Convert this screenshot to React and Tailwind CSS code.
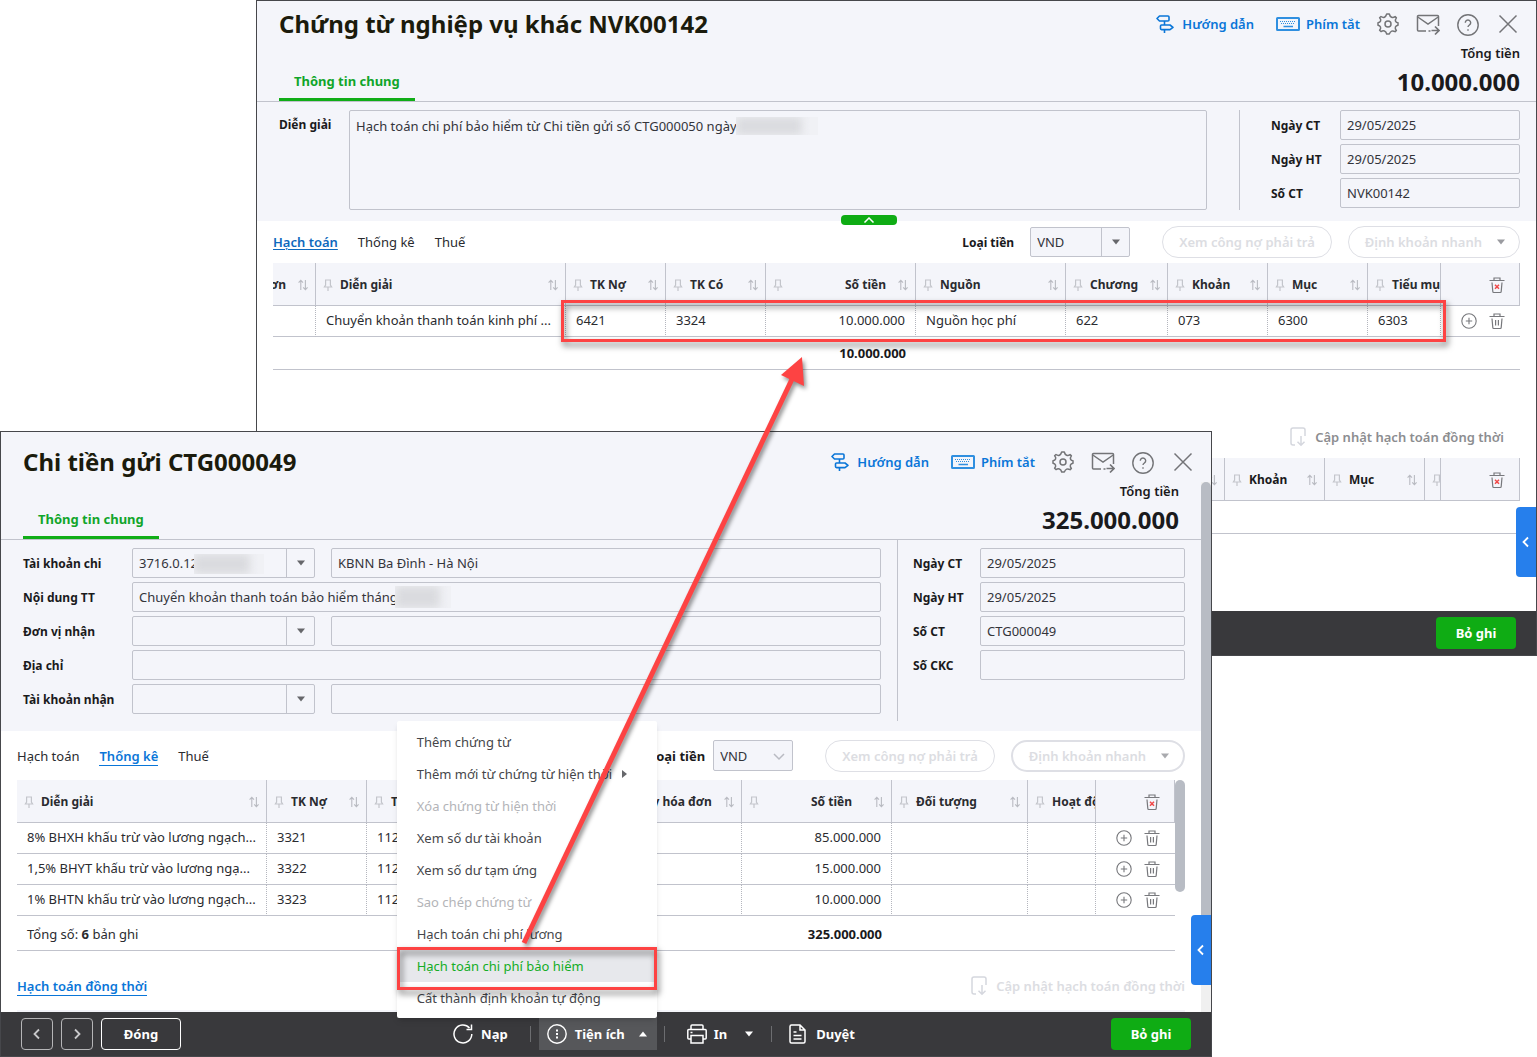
import { useState } from 'react';

const GuideIcon = () => (
  <svg width="18" height="20" viewBox="0 0 18 20" fill="none" stroke="currentColor" strokeWidth="1.600">
    <path d="M3.500 2h8.500a1 1 0 0 1 1 1v3a1 1 0 0 1-1 1H3.500L1 4.500z" strokeLinejoin="round" />
    <path d="M5.500 11H14l3 2.300-3 2.300H5.500a1 1 0 0 1-1-1V12a1 1 0 0 1 1-1z" strokeLinejoin="round" />
    <path d="M8.500 7v4M8.500 15.600V19" />
  </svg>
);

const KeyboardIcon = () => (
  <svg width="24" height="16" viewBox="0 0 24 16" fill="none" stroke="#2f8fe0">
    <rect x="1" y="2" width="22" height="12" rx=".5" strokeWidth="2" />
    <path d="M4 5.500h16M5 7.500h14" strokeWidth="1" strokeDasharray="1 1" />
    <path d="M7.500 10.500h9.500" strokeWidth="1.500" />
  </svg>
);

const GearIcon = () => (
  <svg width="24" height="24" viewBox="0 0 24 24" fill="none" stroke="currentColor" strokeWidth="1.500" strokeLinejoin="round">
    <circle cx="12" cy="12" r="3" />
    <path d="M10.700 2h2.600q.6 2.700 2.300 3.300t3.500-.7l1.300 1.300q-1.500 2-.8 3.400t2.400 1.400v2.600q-2 .2-2.600 1.800t1 3.300l-1.300 1.300q-2-1.200-3.400-.6T13.300 22h-2.600q-.6-2.400-2.300-3t-3.300.6l-1.500-1.300q1.500-1.900.9-3.300T2 13.300v-2.600q2-.1 2.600-1.700t-1-3.200L5 4.500q1.900 1.300 3.400.7T10.700 2z" />
  </svg>
);

const MailIcon = () => (
  <svg width="24" height="24" viewBox="0 0 24 24" fill="none" stroke="currentColor" strokeWidth="1.500">
    <path d="M10 19H2.500a1 1 0 0 1-1-1V4.500a1 1 0 0 1 1-1h19a1 1 0 0 1 1 1V14M12.500 19h2" />
    <path d="M1.800 5 12 12 22.200 5" />
    <path d="M15.500 18.500H23M19 14.500l4 4-4 4" strokeWidth="1.700" />
  </svg>
);

const HelpIcon = () => (
  <svg width="24" height="24" viewBox="0 0 24 24" fill="none" stroke="currentColor" strokeWidth="1.400">
    <circle cx="12" cy="13" r="10.200" />
    <path d="M9.300 10.700a2.700 2.700 0 1 1 4.200 2.200c-1 .7-1.500 1-1.500 2.200" />
    <path d="M12 17.200v1.500" />
  </svg>
);

const CloseIcon = () => (
  <svg width="24" height="24" viewBox="0 0 24 24" fill="none" stroke="currentColor" strokeWidth="1.500">
    <path d="M3.500 3.500l17 17M20.500 3.500l-17 17" />
  </svg>
);

const PinIcon = () => (
  <svg className="shrink-0" width="10" height="12" viewBox="0 0 10 12" fill="none" stroke="#c3c5cb" strokeWidth="1.200">
    <path d="M2.600 1h4.800v5l1.200 2H1.400l1.200-2zM5 8v4" />
  </svg>
);

const SortIcon = () => (
  <svg className="shrink-0" width="10" height="12" viewBox="0 0 10 12" fill="none" stroke="#b9bbc2" strokeWidth="1.100">
    <path d="M2.800 11V1.500M.6 3.700l2.200-2.400L5 3.700M7.400 1v9.500M5.200 8.300l2.200 2.400 2.200-2.400" />
  </svg>
);

const TrashIcon = ({ clear }) => (
  <svg width="16" height="18" viewBox="0 0 16 18" fill="none" stroke="#77787c" strokeWidth="1.200">
    <path d="M.5 4.500h15M5 4.500V2h6v2.500M3 6.500l.8 9a1 1 0 0 0 1 1h6.400a1 1 0 0 0 1-1l.8-9" />
    {clear ? <path d="M6 8.700l4 4M10 8.700l-4 4" stroke="#f04848" strokeWidth="1.500" /> : <path d="M6.600 8v5.500M9.400 8v5.500" />}
  </svg>
);

const PlusIcon = () => (
  <svg width="16" height="16" viewBox="0 0 16 16" fill="none" stroke="#77787c" strokeWidth="1.100">
    <circle cx="8" cy="8" r="7.200" />
    <path d="M8 4.800v6.400M4.800 8h6.400" />
  </svg>
);

const UpdateIcon = () => (
  <svg width="16" height="20" viewBox="0 0 16 20" fill="none" stroke="#d5d7de" strokeWidth="1.500">
    <path d="M5 18H3a2 2 0 0 1-2-2V3a2 2 0 0 1 2-2h10a2 2 0 0 1 2 2v6M11 9v9M7.500 14.800l3.500 3.500 3.500-3.500" />
  </svg>
);

const Triangle = ({ dir = 'down', className }) => (
  <svg className={className} width="8" height="6" viewBox="0 0 8 6" fill="currentColor">
    {dir === 'down' && <path d="M0 .5h8L4 5.500z" />}
    {dir === 'up' && <path d="M0 5.500h8L4 .5z" />}
  </svg>
);

const Chevron = ({ d }) => (
  <svg width="16" height="16" viewBox="0 0 16 16" fill="none" stroke="currentColor" strokeWidth="1.800">
    <path d={d} />
  </svg>
);
const LEFT = 'M10 3.500 5.500 8l4.500 4.500';
const RIGHT = 'M6 3.500 10.500 8 6 12.500';

const Smudge = ({ className }) => (
  <span className={`absolute overflow-hidden bg-[#f0f1f5] ${className}`}>
    <span className="block h-full w-4/5 bg-[#dadbdf] blur-xs" />
  </span>
);

const TitleBar = ({ title, className }) => (
  <div className={`flex items-center justify-between pr-4 pl-[22px] ${className}`}>
    <h1 className="text-2xl font-bold text-[#1b1b0c]">{title}</h1>
    <div className="flex items-center gap-4 text-[#737477]">
      <div className="flex gap-[22px] font-semibold text-[#0a76d8]">
        <a href="#guide" className="flex items-center gap-2"><GuideIcon />Hướng dẫn</a>
        <a href="#keys" className="flex items-center gap-[6px]"><KeyboardIcon />Phím tắt</a>
      </div>
      <button aria-label="Thiết lập"><GearIcon /></button>
      <button aria-label="Gửi mail"><MailIcon /></button>
      <button aria-label="Trợ giúp"><HelpIcon /></button>
      <button aria-label="Đóng cửa sổ"><CloseIcon /></button>
    </div>
  </div>
);

const TotalBar = ({ total, className }) => (
  <div className={`flex h-[58px] items-end justify-between border-b border-[#c1c3cc] pl-[22px] ${className}`}>
    <button className="border-b-3 border-[#10ad17] px-[15px] pb-2 font-bold text-[#10a52a]">Thông tin chung</button>
    <div className="h-full text-right font-semibold">
      <div>Tổng tiền</div>
      <div className="mt-[3px] text-2xl leading-[34px] font-bold">{total}</div>
    </div>
  </div>
);

const Label = ({ htmlFor, children, className }) => (
  <label htmlFor={htmlFor} className={`shrink-0 pt-[2px] text-xs font-bold ${className}`}>{children}</label>
);

const Input = ({ id, label, value = '', className }) => (
  <input
    id={id}
    aria-label={label}
    defaultValue={value}
    className={`h-[30px] min-w-0 rounded-xs border border-[#c1c3cc] px-[6px] text-[#33343a] ${className}`}
  />
);

const Combo = ({ id, value = '', className, children }) => (
  <div className={`relative shrink-0 ${className}`}>
    <select id={id} className="h-[30px] w-full appearance-none rounded-xs border border-[#c1c3cc] bg-[#f4f5fa] px-[6px] text-[#33343a]">
      <option>{value}</option>
    </select>
    {children}
    <span className="pointer-events-none absolute inset-y-0 right-0 flex w-[29px] items-center justify-center border-l border-[#c1c3cc] text-[#66676b]">
      <Triangle />
    </span>
  </div>
);

const SideField = ({ id, label, value, labelClass, inputClass }) => (
  <div className="flex items-center">
    <Label htmlFor={id} className={labelClass}>{label}</Label>
    <Input id={id} value={value} className={inputClass} />
  </div>
);

const HeadCell = ({ label, align = 'mr-auto', clipLeft, noPin }) => (
  <th className="h-[43px] overflow-hidden border-r border-b border-[#c1c3cc] bg-[#f4f5fa] p-0 pt-[2px] text-left text-xs font-bold whitespace-nowrap">
    <div className={`flex items-center ${clipLeft ? 'justify-end' : ''} px-[7px]`}>
      {!noPin && <PinIcon />}
      {label && <span className={`shrink-0 ${align}`}><span className={noPin ? '' : 'ml-[7px]'}>{label}</span></span>}
      <SortIcon />
    </div>
  </th>
);

const ClearCell = () => (
  <th className="overflow-hidden border-r border-b border-[#c1c3cc] bg-[#f4f5fa] p-0 pt-[2px]">
    <div className="flex justify-end pr-[14px]">
      <button aria-label="Xóa tất cả dòng"><TrashIcon clear /></button>
    </div>
  </th>
);

const Cell = ({ children, right }) => (
  <td className={`h-[31px] truncate border-b border-b-[#c1c3cc] p-0 pr-[10px] pb-[2px] pl-[10px] [border-right:1px_dotted_#b4b6be] ${right ? 'text-right' : ''}`}>
    {children}
  </td>
);

const ActionCell = () => (
  <td className="border-b border-[#c1c3cc] p-0">
    <div className="flex items-center justify-end gap-3 pr-[15px]">
      <button aria-label="Thêm dòng"><PlusIcon /></button>
      <button aria-label="Xóa dòng"><TrashIcon /></button>
    </div>
  </td>
);

const Cols = ({ widths }) => (
  <colgroup>
    {widths.map((w, i) => <col key={i} style={w ? { width: w } : undefined} />)}
  </colgroup>
);

const PillButton = ({ children, className }) => (
  <button disabled className={`flex h-8 items-center rounded-full border-[#dedfe5] font-semibold text-[#dcdde2] ${className}`}>
    {children}
  </button>
);

const PostButton = () => (
  <button className="h-8 w-20 rounded bg-[#0fac14] font-bold text-white">Bỏ ghi</button>
);

const EdgeTab = ({ className }) => (
  <button aria-label="Mở rộng" className={`absolute right-0 flex h-[70px] w-5 items-center justify-center rounded-l bg-[#267fec] text-white ${className}`}>
    <Chevron d={LEFT} />
  </button>
);

const VoucherWindow = () => (
  <section className="ml-64 border border-[#46474b] bg-white">
    <div className="relative bg-[#f4f5fa]">
      <TitleBar title="Chứng từ nghiệp vụ khác NVK00142" className="h-[43px] pt-[3px]" />
      <TotalBar total="10.000.000" className="pr-4" />
      <div className="flex pt-2 pr-4 pb-[11px] pl-[22px]">
        <Label htmlFor="nvk-desc" className="mt-[5px] w-[70px]">Diễn giải</Label>
        <div className="relative flex min-w-0 flex-1">
          <textarea
            id="nvk-desc"
            className="h-[100px] w-full resize-none rounded-xs border border-[#c1c3cc] px-[6px] py-[6px] text-[#33343a]"
            defaultValue="Hạch toán chi phí bảo hiểm từ Chi tiền gửi số CTG000050 ngày"
          />
          <Smudge className="top-[7px] left-[387px] h-[18px] w-[82px]" />
        </div>
        <div className="ml-8 flex flex-col gap-1 border-l border-[#c1c3cc] pl-[31px]">
          <SideField id="nvk-ct" label="Ngày CT" value="29/05/2025" labelClass="w-[69px]" inputClass="w-[180px]" />
          <SideField id="nvk-ht" label="Ngày HT" value="29/05/2025" labelClass="w-[69px]" inputClass="w-[180px]" />
          <SideField id="nvk-so" label="Số CT" value="NVK00142" labelClass="w-[69px]" inputClass="w-[180px]" />
        </div>
      </div>
      <button aria-label="Thu gọn" className="absolute -bottom-1 left-[584px] flex h-[10px] w-14 items-center justify-center rounded bg-[#0fac14] text-white">
        <svg width="12" height="6" viewBox="0 0 12 6" fill="none" stroke="currentColor" strokeWidth="1.500"><path d="M1.500 5.500 6 1l4.500 4.500" /></svg>
      </button>
    </div>

    <div className="flex h-[42px] items-center px-4">
      <nav className="flex gap-5 text-[#2a2b2f]">
        <a href="#ht" className="font-semibold text-[#0f69bd] underline underline-offset-2">Hạch toán</a>
        <a href="#tk">Thống kê</a>
        <a href="#thue">Thuế</a>
      </nav>
      <Label htmlFor="nvk-cur" className="ml-auto">Loại tiền</Label>
      <Combo id="nvk-cur" value="VND" className="ml-4 w-[100px]" />
      <PillButton className="ml-8 border px-4">Xem công nợ phải trả</PillButton>
      <PillButton className="ml-4 gap-[15px] border pr-[14px] pl-4">Định khoản nhanh<Triangle className="text-[#9a9ba0]" /></PillButton>
    </div>

    <div className="px-4">
      <table className="w-full table-fixed border-separate border-spacing-0 text-[#2a2b2f]">
        <Cols widths={[43, 0, 100, 100, 150, 150, 102, 100, 100, 73, 79]} />
        <thead>
          <tr>
            <HeadCell label="đơn" clipLeft noPin align="mr-3" />
            <HeadCell label="Diễn giải" />
            <HeadCell label="TK Nợ" />
            <HeadCell label="TK Có" />
            <HeadCell label="Số tiền" align="ml-auto mr-3" />
            <HeadCell label="Nguồn" />
            <HeadCell label="Chương" />
            <HeadCell label="Khoản" />
            <HeadCell label="Mục" />
            <HeadCell label="Tiểu mục" />
            <ClearCell />
          </tr>
        </thead>
        <tbody>
          <tr>
            <Cell />
            <Cell>Chuyển khoản thanh toán kinh phí ...</Cell>
            <Cell>6421</Cell>
            <Cell>3324</Cell>
            <Cell right>10.000.000</Cell>
            <Cell>Nguồn học phí</Cell>
            <Cell>622</Cell>
            <Cell>073</Cell>
            <Cell>6300</Cell>
            <Cell>6303</Cell>
            <ActionCell />
          </tr>
        </tbody>
        <tfoot>
          <tr>
            <td colSpan={5} className="h-[33px] border-b border-[#c1c3cc] p-0 pr-[10px] text-right font-bold text-[#1a1a1c]">10.000.000</td>
            <td colSpan={6} className="border-b border-[#c1c3cc]" />
          </tr>
        </tfoot>
      </table>
    </div>

    <div className="mt-[46px] flex h-[42px] items-center justify-end gap-[9px] pr-8 text-[#8c8d90]">
      <UpdateIcon />
      <button className="font-semibold">Cập nhật hạch toán đồng thời</button>
    </div>
    <div className="relative px-4 pb-[77px]">
      <table className="w-full table-fixed border-separate border-spacing-0">
        <Cols widths={[0, 100, 100, 16, 79]} />
        <thead>
          <tr>
            <HeadCell label="Diễn giải" />
            <HeadCell label="Khoản" />
            <HeadCell label="Mục" />
            <HeadCell />
            <ClearCell />
          </tr>
        </thead>
        <tbody>
          <tr><td colSpan={5} className="h-[33px] border-b border-[#c1c3cc]" /></tr>
        </tbody>
      </table>
      <EdgeTab className="bottom-[34px]" />
    </div>
    <footer className="flex h-11 items-center justify-end bg-[#39393c] pr-5">
      <PostButton />
    </footer>
  </section>
);

const menuItems = [
  { text: 'Thêm chứng từ' },
  { text: 'Thêm mới từ chứng từ hiện thời', sub: true },
  { text: 'Xóa chứng từ hiện thời', disabled: true },
  { text: 'Xem số dư tài khoản' },
  { text: 'Xem số dư tạm ứng' },
  { text: 'Sao chép chứng từ', disabled: true },
  { text: 'Hạch toán chi phí lương' },
  { text: 'Hạch toán chi phí bảo hiểm', active: true },
  { text: 'Cất thành định khoản tự động' },
];

const UtilityMenu = () => (
  <ul className="absolute right-0 bottom-full z-10 w-[260px] rounded-xs bg-white pt-[5px] pb-1 font-normal text-[#45464a] shadow-md">
    {menuItems.map(item => (
      <li key={item.text}>
        <button
          disabled={item.disabled}
          className={`flex h-8 w-full items-center gap-[10px] px-5 ${item.active ? 'bg-[#e7e8ec] text-[#14ad26]' : ''} ${item.disabled ? 'text-[#b3b4b8]' : ''}`}
        >
          {item.text}
          {item.sub && <svg width="5" height="8" viewBox="0 0 5 8" fill="#66676b"><path d="M0 0l5 4-5 4z" /></svg>}
        </button>
      </li>
    ))}
  </ul>
);

const rows = [
  { desc: '8% BHXH khấu trừ vào lương ngạch...', no: '3321', co: '112', amount: '85.000.000' },
  { desc: '1,5% BHYT khấu trừ vào lương ngạ...', no: '3322', co: '112', amount: '15.000.000' },
  { desc: '1% BHTN khấu trừ vào lương ngạch...', no: '3323', co: '112', amount: '10.000.000' },
];

const Divider = ({ className }) => <span className={`h-4 w-px bg-[#6c6d70] ${className}`} />;

const PaymentWindow = () => {
  const [menuOpen, setMenuOpen] = useState(true);

  return (
    <section className="relative -mt-[225px] mr-[325px] border border-[#46474b] bg-white">
      <TitleBar title="Chi tiền gửi CTG000049" className="h-[50px] bg-[#f4f5fa] pt-[10px]" />
      <div className="relative flex">
        <div className="min-w-0 flex-1">
          <div className="bg-[#f4f5fa]">
            <TotalBar total="325.000.000" className="pr-[22px]" />
            <div className="flex pr-4 pb-[10px] pl-[22px]">
              <div className="flex min-w-0 flex-1 flex-col gap-1 pt-2 pb-[7px]">
                <div className="flex items-center">
                  <Label htmlFor="ctg-tk" className="w-[109px]">Tài khoản chi</Label>
                  <Combo id="ctg-tk" value="3716.0.12" className="w-[183px]">
                    <Smudge className="top-[6px] left-[62px] h-5 w-[70px]" />
                  </Combo>
                  <Input label="Tên tài khoản chi" value="KBNN Ba Đình - Hà Nội" className="ml-4 flex-1" />
                </div>
                <div className="relative flex items-center">
                  <Label htmlFor="ctg-nd" className="w-[109px]">Nội dung TT</Label>
                  <Input id="ctg-nd" value="Chuyển khoản thanh toán bảo hiểm tháng" className="flex-1" />
                  <Smudge className="top-1 left-[372px] h-[22px] w-14" />
                </div>
                <div className="flex items-center">
                  <Label htmlFor="ctg-dv" className="w-[109px]">Đơn vị nhận</Label>
                  <Combo id="ctg-dv" className="w-[183px]" />
                  <Input label="Tên đơn vị nhận" className="ml-4 flex-1" />
                </div>
                <div className="flex items-center">
                  <Label htmlFor="ctg-dc" className="w-[109px]">Địa chỉ</Label>
                  <Input id="ctg-dc" className="flex-1" />
                </div>
                <div className="flex items-center">
                  <Label htmlFor="ctg-tn" className="w-[109px]">Tài khoản nhận</Label>
                  <Combo id="ctg-tn" className="w-[183px]" />
                  <Input label="Tên tài khoản nhận" className="ml-4 flex-1" />
                </div>
              </div>
              <div className="ml-4 flex flex-col gap-1 border-l border-[#c1c3cc] pt-2 pl-[15px]">
                <SideField id="ctg-ct" label="Ngày CT" value="29/05/2025" labelClass="w-[67px]" inputClass="w-[205px]" />
                <SideField id="ctg-ht" label="Ngày HT" value="29/05/2025" labelClass="w-[67px]" inputClass="w-[205px]" />
                <SideField id="ctg-so" label="Số CT" value="CTG000049" labelClass="w-[67px]" inputClass="w-[205px]" />
                <SideField id="ctg-ckc" label="Số CKC" labelClass="w-[67px]" inputClass="w-[205px]" />
              </div>
            </div>
          </div>

          <div className="flex h-[49px] items-center px-4">
            <nav className="flex gap-5 text-[#2a2b2f]">
              <a href="#ht2" className="py-px">Hạch toán</a>
              <a href="#tk2" className="border-b border-[#0a76d8] pt-px font-semibold text-[#0a76d8]">Thống kê</a>
              <a href="#thue2" className="py-px">Thuế</a>
            </nav>
            <label htmlFor="ctg-cur" className="ml-auto font-bold">Loại tiền</label>
            <div className="relative ml-2 w-20">
              <select id="ctg-cur" className="h-[31px] w-full appearance-none rounded-xs border border-[#c1c3cc] bg-[#f4f5fa] px-[6px] text-[#33343a]">
                <option>VND</option>
              </select>
              <svg className="pointer-events-none absolute top-[13px] right-2" width="12" height="8" viewBox="0 0 12 8" fill="none" stroke="#b9bbc2" strokeWidth="1.500"><path d="M1 1l5 5 5-5" /></svg>
            </div>
            <PillButton className="ml-8 border px-4">Xem công nợ phải trả</PillButton>
            <PillButton className="ml-4 gap-[15px] border-2 pr-[14px] pl-4">Định khoản nhanh<Triangle className="text-[#a9aaae]" /></PillButton>
          </div>

          <div className="flex px-4">
            <table className="w-full table-fixed border-separate border-spacing-0 text-[#2a2b2f]">
              <Cols widths={[250, 100, 0, 138, 150, 136, 68, 79]} />
              <thead>
                <tr>
                  <HeadCell label="Diễn giải" />
                  <HeadCell label="TK Nợ" />
                  <HeadCell label="TK Có" />
                  <HeadCell label="Ngày hóa đơn" />
                  <HeadCell label="Số tiền" align="ml-auto mr-[22px]" />
                  <HeadCell label="Đối tượng" />
                  <HeadCell label="Hoạt động" />
                  <ClearCell />
                </tr>
              </thead>
              <tbody>
                {rows.map(row => (
                  <tr key={row.no}>
                    <Cell>{row.desc}</Cell>
                    <Cell>{row.no}</Cell>
                    <Cell>{row.co}</Cell>
                    <Cell />
                    <Cell right>{row.amount}</Cell>
                    <Cell />
                    <Cell />
                    <ActionCell />
                  </tr>
                ))}
              </tbody>
              <tfoot>
                <tr>
                  <td colSpan={2} className="h-[35px] border-b border-[#c1c3cc] p-0 pt-[2px] pl-[10px]">Tổng số: <b>6</b> bản ghi</td>
                  <td colSpan={3} className="border-b border-[#c1c3cc] p-0 pt-[2px] pr-[10px] text-right font-bold text-[#1a1a1c]">325.000.000</td>
                  <td colSpan={3} className="border-b border-[#c1c3cc]" />
                </tr>
              </tfoot>
            </table>
            <div className="h-28 w-[10px] shrink-0 rounded-full bg-[#b8bcc4]" />
          </div>

          <div className="mt-[10px] flex h-[49px] items-center justify-between px-4 font-semibold">
            <a href="#dongthoi" className="border-b border-[#0a76d8] pt-px text-[#0a76d8]">Hạch toán đồng thời</a>
            <button disabled className="flex items-center gap-[9px] text-[#dcdde2]"><UpdateIcon />Cập nhật hạch toán đồng thời</button>
          </div>
          <div className="mx-4 h-[2px] bg-[#f4f5fa]" />
        </div>
        <div className="w-[10px] shrink-0 bg-[#f0f0f0]">
          <div className="h-[470px] rounded-full bg-[#b8bcc4]" />
        </div>
        <EdgeTab className="bottom-[27px]" />
      </div>

      <footer className="flex h-11 items-center bg-[#39393c] px-5 font-bold text-white">
        <div className="flex gap-2">
          <button aria-label="Trước" className="flex size-8 items-center justify-center rounded-sm border border-[#b5b5b7] text-[#c9c9cb]"><Chevron d={LEFT} /></button>
          <button aria-label="Sau" className="flex size-8 items-center justify-center rounded-sm border border-[#b5b5b7] text-[#c9c9cb]"><Chevron d={RIGHT} /></button>
          <button className="h-8 w-20 rounded-sm border border-white">Đóng</button>
        </div>
        <div className="mr-64 ml-auto flex items-center">
          <button className="flex items-center gap-2">
            <svg width="20" height="20" viewBox="0 0 20 20" fill="none" stroke="currentColor" strokeWidth="1.500">
              <path d="M18.800 10A8.900 8.900 0 1 1 16.500 4M18.500.5v5h-5" />
            </svg>
            Nạp
          </button>
          <Divider className="mr-2 ml-[22px]" />
          <div className="relative">
            <button onClick={() => setMenuOpen(!menuOpen)} className="flex h-8 items-center gap-2 bg-[#56575a] pr-[10px] pl-2">
              <svg width="20" height="20" viewBox="0 0 20 20" fill="none" stroke="currentColor" strokeWidth="1.400">
                <circle cx="10" cy="10" r="9.200" />
                <path d="M10 5.500v2M10 9v2M10 12.500v2" strokeWidth="2" />
              </svg>
              Tiện ích
              <Triangle dir="up" className="ml-[6px]" />
            </button>
            {menuOpen && <UtilityMenu />}
          </div>
          <Divider className="ml-[7px]" />
          <button className="ml-[22px] flex items-center gap-[7px]">
            <svg width="20" height="20" viewBox="0 0 20 20" fill="none" stroke="currentColor" strokeWidth="1.500">
              <path d="M4 5.500V2a1 1 0 0 1 1-1h10a1 1 0 0 1 1 1v3.500M4 15H1.800a1 1 0 0 1-1-1V6.500a1 1 0 0 1 1-1h16.400a1 1 0 0 1 1 1V14a1 1 0 0 1-1 1H16" />
              <path d="M4 11.500h12V19H4zM3.500 8.500h2" />
            </svg>
            In
          </button>
          <button aria-label="Tùy chọn in" className="ml-[18px]"><Triangle /></button>
          <Divider className="ml-[18px]" />
          <button className="ml-[17px] flex items-center gap-[9px]">
            <svg width="18" height="20" viewBox="0 0 18 20" fill="none" stroke="currentColor" strokeWidth="1.500">
              <path d="M11 1H2.500a1.500 1.500 0 0 0-1.500 1.500v15A1.500 1.500 0 0 0 2.500 19h12a1.500 1.500 0 0 0 1.500-1.500V6zM11 1v5h5M4.500 8h3M4.500 11.500h8M4.500 15h8" />
            </svg>
            Duyệt
          </button>
        </div>
        <PostButton />
      </footer>
    </section>
  );
};

const App = () => (
  <main className="relative min-h-screen overflow-hidden bg-white font-['Noto_Sans',sans-serif] text-[13px] leading-[18px] text-[#1a1a1c]">
    <VoucherWindow />
    <PaymentWindow />

    {/* callouts drawn over both windows */}
    <div className="pointer-events-none absolute top-[300px] right-[91px] left-[561px] h-[42px] border-3 border-[#fd4343] drop-shadow-[2px_4px_3px_rgba(0,0,0,0.55)]" />
    <div className="pointer-events-none absolute top-[947px] left-[397px] z-20 h-[43px] w-[260px] border-3 border-[#fd4343] drop-shadow-[2px_4px_3px_rgba(0,0,0,0.55)]" />
    <svg className="pointer-events-none absolute top-[350px] left-[510px] z-20 drop-shadow-[2px_3px_2px_rgba(0,0,0,0.45)]" width="310" height="610" viewBox="0 0 310 610">
      <path d="M14 593 284 25" stroke="#fd4343" strokeWidth="5" />
      <path d="M292 7 271 25l23 11z" fill="#fd4343" />
    </svg>
  </main>
);

export default App;
